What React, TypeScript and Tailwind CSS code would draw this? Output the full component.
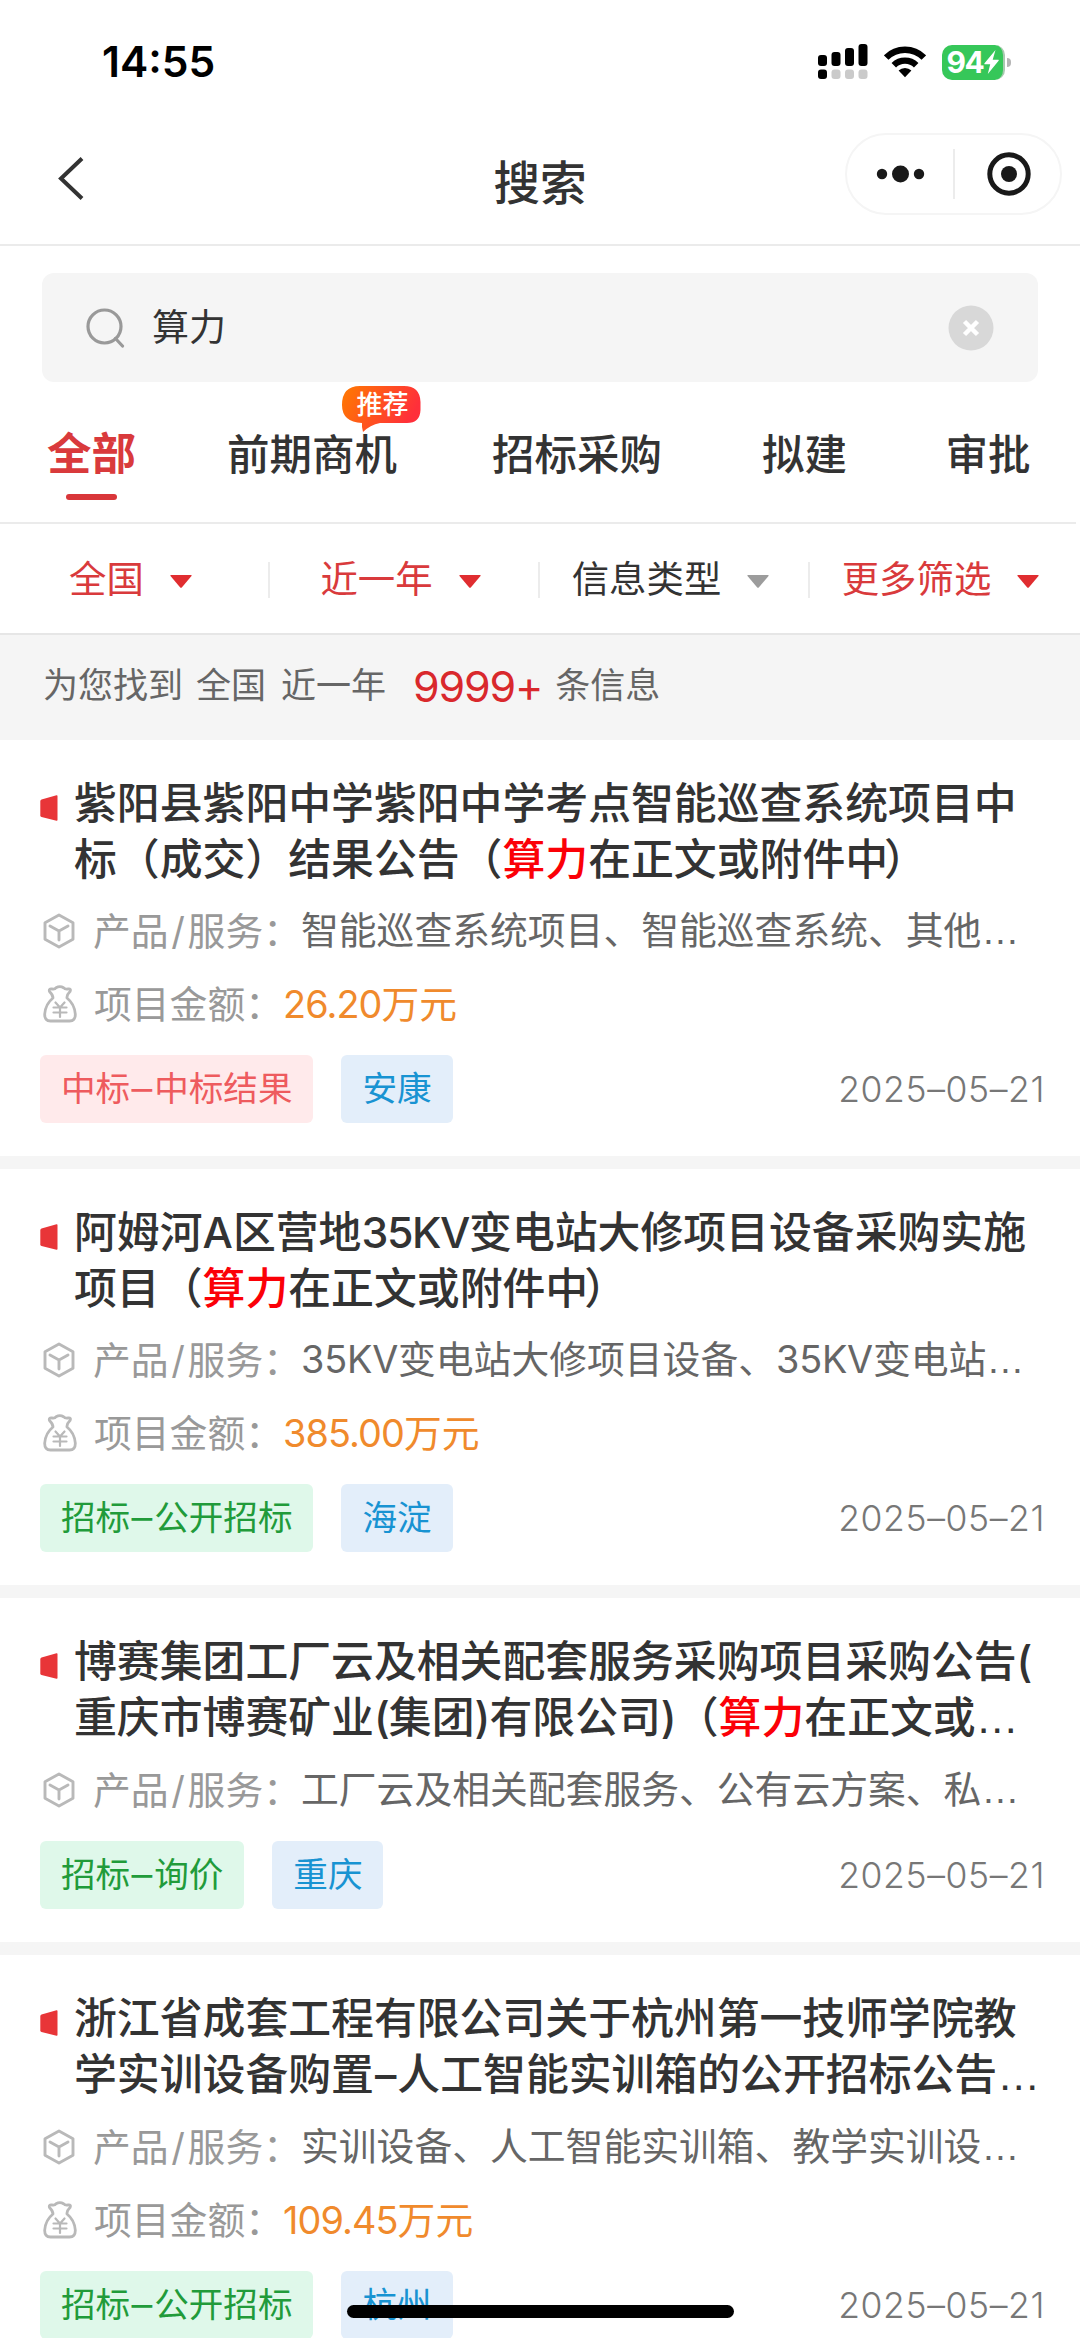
import type { ReactNode } from "react";

interface Notice {
  title: ReactNode[];
  product: ReactNode;
  amount?: [string, string];
  kind: [string, string];
  kindTone: "red" | "green";
  city: string;
  date: string;
}

const Hit = () => <span className="text-[#fb0007]">算力</span>;
const Dots = () => <span className="font-['Liberation_Sans']">…</span>;
const Tight = ({ children }: { children: ReactNode }) => <span className="tracking-[-0.9px]">{children}</span>;
const Close = () => <span className="-ml-[4px]">）</span>;

const notices: Notice[] = [
  {
    title: ["紫阳县紫阳中学紫阳中学考点智能巡查系统项目中", <>标（成交）结果公告（<Hit />在正文或附件中<Close /></>],
    product: "智能巡查系统项目、智能巡查系统、其他",
    amount: ["26.20", "万元"],
    kind: ["中标", "中标结果"],
    kindTone: "red",
    city: "安康",
    date: "2025–05–21",
  },
  {
    title: [
      <>阿姆河A区营地<span className="tracking-[-1.4px]">35KV</span>变电站大修项目设备采购实施</>,
      <>项目（<Hit />在正文或附件中<Close /></>,
    ],
    product: (
      <>
        <span className="tracking-[-0.2px]">35KV</span>变电站大修项目设备、<span className="tracking-[-0.2px]">35KV</span>变电站
      </>
    ),
    amount: ["385.00", "万元"],
    kind: ["招标", "公开招标"],
    kindTone: "green",
    city: "海淀",
    date: "2025–05–21",
  },
  {
    title: [
      "博赛集团工厂云及相关配套服务采购项目采购公告(",
      <>重庆市博赛矿业<Tight>(</Tight>集团<Tight>)</Tight>有限公司<Tight>)</Tight>（<Hit />在正文或<Dots /></>,
    ],
    product: "工厂云及相关配套服务、公有云方案、私",
    kind: ["招标", "询价"],
    kindTone: "green",
    city: "重庆",
    date: "2025–05–21",
  },
  {
    title: [
      "浙江省成套工程有限公司关于杭州第一技师学院教",
      <>学实训设备购置<span className="mx-[1px]">–</span>人工智能实训箱的公开招标公告<Dots /></>,
    ],
    product: "实训设备、人工智能实训箱、教学实训设",
    amount: ["109.45", "万元"],
    kind: ["招标", "公开招标"],
    kindTone: "green",
    city: "杭州",
    date: "2025–05–21",
  },
];

const filters = [
  { label: "全国", active: true },
  { label: "近一年", active: true },
  { label: "信息类型", active: false },
  { label: "更多筛选", active: true },
];

function StatusBar() {
  return (
    <div className="flex h-[124px] items-center justify-between pl-[102px] pr-[69px]">
      <span className="text-[42.500px] leading-none font-semibold text-black">14:55</span>
      <div className="flex items-center">
        <svg width="50" height="36" viewBox="0 0 50 36">
          <g fill="#000">
            <rect x="0" y="11" width="9" height="11" rx="3" />
            <rect x="13.5" y="8" width="9" height="14" rx="3" />
            <rect x="27" y="4" width="9" height="18" rx="3" />
            <rect x="40.5" y="0" width="9" height="22" rx="3" />
            <rect x="0" y="25.5" width="9" height="9.5" rx="3" />
          </g>
          <g fill="#cacaca">
            <rect x="13.5" y="25.5" width="9" height="9.5" rx="3" />
            <rect x="27" y="25.5" width="9" height="9.5" rx="3" />
            <rect x="40.5" y="25.5" width="9" height="9.5" rx="3" />
          </g>
        </svg>
        <svg className="ml-4" width="42" height="34" viewBox="0 0 42 34" fill="none" stroke="#000" strokeWidth="6.4">
          <path d="M2.2 12.6a26.6 26.6 0 0 1 37.6 0" />
          <path d="M9.8 20.2a16 16 0 0 1 22.4 0" />
          <path d="M14.6 25.6a9.2 9.2 0 0 1 12.8 0L21 32.2z" fill="#000" stroke="none" />
        </svg>
        <div className="ml-4 flex h-[35px] w-[63px] items-center justify-center rounded-[10px] border-r-2 border-[#a9c9b0] bg-[#36c759] pl-[1px]">
          <span className="text-[30px] leading-none font-bold tracking-[-1.5px] text-white">94</span>
          <svg className="ml-[1px]" width="15" height="24" viewBox="0 0 15 24" fill="#fff">
            <path d="M11.5 0 0.5 13.2c-.4.5-.1 1 .5 1h5.2L3.8 24 14.6 10.700c.4-.5.1-1-.5-1H8.700z" />
          </svg>
        </div>
        <span className="ml-[2px] h-[9px] w-[4px] rounded-r-full bg-[#b5b5b5]" />
      </div>
    </div>
  );
}

function NavBar() {
  return (
    <div className="grid h-[122px] grid-cols-[1fr_auto_1fr] border-b-2 border-[#ebebeb]">
      <svg className="mt-[33px] ml-[58px]" width="27" height="43" viewBox="0 0 27 43" fill="none" stroke="#333" strokeWidth="4">
        <path d="M24 1.500 3 21.500 24 41.500" />
      </svg>
      <h1 className="mt-[26px] text-[46.500px] leading-[66px] font-medium text-[#333]">搜索</h1>
      <div className="mt-[9px] mr-[18px] flex h-[82px] w-[217px] items-center justify-self-end rounded-full border-2 border-[#f5f5f5]">
        <svg width="106" height="40" viewBox="0 0 106 40" fill="#191919">
          <circle cx="35" cy="20" r="5.200" />
          <circle cx="53.500" cy="20" r="8.500" />
          <circle cx="72" cy="20" r="5.200" />
        </svg>
        <span className="h-[50px] w-[2px] bg-[#ececec]" />
        <svg className="ml-[31px]" width="46" height="46" viewBox="0 0 46 46" fill="none">
          <circle cx="23" cy="23" r="19.200" stroke="#191919" strokeWidth="5" />
          <circle cx="23" cy="23" r="8" fill="#191919" />
        </svg>
      </div>
    </div>
  );
}

function SearchBox() {
  return (
    <div className="mx-[42px] mt-[27px] flex h-[109px] items-center rounded-xl bg-[#f5f5f5] px-[44px]">
      <svg width="40" height="40" viewBox="0 0 40 40" fill="none" stroke="#999" strokeWidth="3.200">
        <circle cx="18.500" cy="18.500" r="16.500" />
        <path d="m29.500 30.500 7 7.500" strokeLinecap="round" />
      </svg>
      <span className="ml-[26px] flex-1 pt-[1px] text-[37px] text-[#333]">算力</span>
      <svg width="46" height="46" viewBox="0 0 46 46">
        <circle cx="23" cy="23" r="22.500" fill="#d8d8d8" />
        <path d="m16.500 16.500 13 13m0-13-13 13" stroke="#fff" strokeWidth="4.500" />
      </svg>
    </div>
  );
}

function Tabs() {
  return (
    <div className="flex h-[142px] w-[1076px] items-start border-b-2 border-[#ebebeb] pt-[41px] pl-[47px] text-[42.500px] leading-[64px] font-medium whitespace-nowrap text-[#333]">
      <div className="-mt-[1px] flex flex-col items-center">
        <span className="text-[44.500px] font-bold text-[#d93a3c]">全部</span>
        <span className="mt-[8px] h-[6px] w-[51px] rounded-full bg-[#d9363a]" />
      </div>
      <div className="relative ml-[91px]">
        前期商机
        <div className="absolute -top-[37px] left-[115px]">
          <svg width="79" height="46" viewBox="0 0 79 46">
            <defs>
              <linearGradient id="badge" x1="0" y1="0" x2="1" y2="0.300">
                <stop offset="0" stopColor="#ff7a00" />
                <stop offset="1" stopColor="#ff2f3a" />
              </linearGradient>
            </defs>
            <path
              d="M18 0H62Q78 0 78.500 16V24Q78 37 65 37H38Q28 39 21 46 19.500 41 20 37 0 36 0 19 0 0 18 0z"
              fill="url(#badge)"
            />
          </svg>
          <span className="absolute top-0 left-[1px] w-[79px] text-center text-[26px] leading-[37px] font-medium text-white">推荐</span>
        </div>
      </div>
      <span className="ml-[95px]">招标采购</span>
      <span className="ml-[100px]">拟建</span>
      <span className="ml-[98.500px]">审批</span>
    </div>
  );
}

function Filters() {
  return (
    <div className="grid h-[111px] grid-cols-4 items-center border-b-2 border-[#e6e6e6] pt-[2px]">
      {filters.map((f, i) => (
        <div
          key={f.label}
          className={`flex h-9 items-center justify-center ${i < 3 ? "border-r-2 border-[#ececec] pr-[7px]" : "pr-[9px]"} ${
            f.active ? "text-[#d93a3c]" : "text-[#333]"
          }`}
        >
          <span className="pt-[1px] text-[37.400px]">{f.label}</span>
          <svg
            className={f.active ? "mt-1 ml-[26px] text-[#e02d30]" : "mt-1 ml-[26px] text-[#9c9c9c]"}
            width="22"
            height="13"
            viewBox="0 0 22 13"
            fill="currentColor"
          >
            <path d="M1 0h20q1.200 0 .5 1L12 12.300q-1 1-2 0L.5 1Q-.2 0 1 0z" />
          </svg>
        </div>
      ))}
    </div>
  );
}

function BoxIcon() {
  return (
    <svg width="32" height="36" viewBox="0 0 32 36" fill="none" stroke="#b9b9b9" strokeWidth="2.900" strokeLinejoin="round">
      <path d="M16 2 30 9.700V26.300L16 34 2 26.300V9.700z" />
      <path d="M7 13 16 18l9-5M16 18V27" strokeLinecap="round" />
    </svg>
  );
}

function MoneyIcon() {
  return (
    <svg width="34" height="38" viewBox="0 0 34 38" fill="none" stroke="#b9b9b9" strokeWidth="2.800" strokeLinejoin="round" strokeLinecap="round">
      <path d="M10 13Q10 10 6.500 6.500 5.500 3.500 9 4 12 4.500 13 2.700 17 .5 20.500 2.700 22 4.500 25 4 28.500 3.500 27 6.500 23.500 10 24 13 31.500 19 32.300 29 32.500 36 26.500 36H7.500Q1.500 36 1.700 29 2.500 19 10 13z" />
      <path d="m12.500 17.500 4.500 5 4.500-5M10.500 22.500h13M10.500 27.500h13M17 22.500v9.500" strokeWidth="2.200" />
    </svg>
  );
}

function NoticeCard({ item }: { item: Notice }) {
  return (
    <div className="border-b-[13px] border-[#f5f5f5] bg-white pt-[36px] pr-[36px] pb-[33.200px] pl-[40px]">
      <div className="flex">
        <svg className="mt-[18.500px] shrink-0" width="18" height="26" viewBox="0 0 18 26">
          <path d="M1.500 4.500 16.500.2q1-.2 1 .8v24q0 1-1 .8L1.500 22Q.3 21.500.3 20.500V6Q.3 5 1.500 4.500z" fill="#e83538" />
        </svg>
        <h2 className="ml-[16px] text-[42.850px] leading-[55.600px] font-medium whitespace-nowrap text-[#333]">
          {item.title.map((line, i) => (
            <div key={i}>{line}</div>
          ))}
        </h2>
      </div>
      <div className="mt-[7px] flex h-[73.400px] items-center pl-[3px] text-[37.800px] whitespace-nowrap">
        <BoxIcon />
        <span className="ml-[18px] text-[#999]">产品<span className="inline-block w-[19px] text-center">/</span>服务：</span>
        <span className="text-[#666]">
          {item.product}
          <Dots />
        </span>
      </div>
      {item.amount && (
        <div className="flex h-[73.400px] items-center pl-[3px] text-[37.800px] whitespace-nowrap">
          <MoneyIcon />
          <span className="ml-[17px] text-[#999]">项目金额：</span>
          <span className="text-[#f08a2c]">
            <Tight>{item.amount[0]}</Tight>
            {item.amount[1]}
          </span>
        </div>
      )}
      <div className="mt-[14px] flex h-[68px] items-center text-[34.600px]">
        <span
          className={`flex h-full items-center rounded-md px-[21px] ${
            item.kindTone === "red" ? "bg-[#ffeaeb] text-[#ee5b5e]" : "bg-[#dff8ea] text-[#219b3a]"
          }`}
        >
          {item.kind[0]}
          <span className="w-[24px] scale-x-120 text-center">–</span>
          {item.kind[1]}
        </span>
        <span className="ml-[28px] flex h-full items-center rounded-md bg-[#e3eefa] px-[21px] text-[#1893d2]">{item.city}</span>
        <span className="-mr-[1px] ml-auto pt-[1px] text-[35.500px] font-light tracking-[0.6px] text-[#777]">{item.date}</span>
      </div>
    </div>
  );
}

export default function App() {
  return (
    <div lang="zh-CN" className="relative h-[2338px] w-[1080px] overflow-hidden bg-white font-['Inter','Noto_Sans_CJK_SC',sans-serif]">
      <StatusBar />
      <NavBar />
      <SearchBox />
      <Tabs />
      <Filters />
      <div className="flex h-[105px] items-center bg-[#f5f5f5] pb-[5px] pl-[43px] text-[35px] whitespace-pre text-[#666]">
        <span>为您找到</span>
        <span className="ml-[13px]">全国</span>
        <span className="ml-[15px]">近一年</span>
        <span className="ml-[27px] pt-[2px] text-[43px] tracking-[-1.2px] text-[#d9282c]">9999+</span>
        <span className="ml-[13px]">条信息</span>
      </div>
      {notices.map((n, i) => (
        <NoticeCard key={i} item={n} />
      ))}
      <div className="absolute bottom-[20px] left-[347px] h-[13px] w-[387px] rounded-full bg-black" />
    </div>
  );
}
